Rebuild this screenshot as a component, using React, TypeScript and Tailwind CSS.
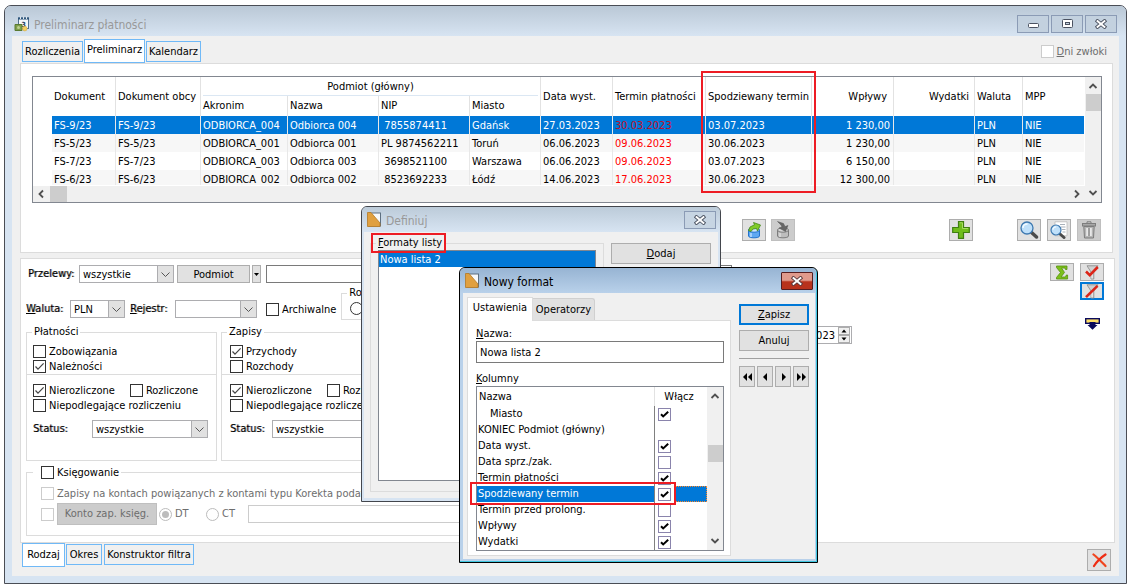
import React from 'react';
import { clsx } from 'clsx';

const DOCUMENTS = [
  { id: 'FS-9/23', acronym: 'ODBIORCA_004', name: 'Odbiorca 004', nip: '\u00a07855874411', city: 'Gdańsk', issued: '27.03.2023', due: '30.03.2023', expected: '03.07.2023', income: '1 230,00', selected: true },
  { id: 'FS-5/23', acronym: 'ODBIORCA_001', name: 'Odbiorca 001', nip: 'PL 9874562211', city: 'Toruń', issued: '06.06.2023', due: '09.06.2023', expected: '30.06.2023', income: '1 230,00' },
  { id: 'FS-7/23', acronym: 'ODBIORCA_003', name: 'Odbiorca 003', nip: '\u00a03698521100', city: 'Warszawa', issued: '06.06.2023', due: '09.06.2023', expected: '03.07.2023', income: '6 150,00' },
  { id: 'FS-6/23', acronym: 'ODBIORCA_002', name: 'Odbiorca 002', nip: '\u00a08523692233', city: 'Łódź', issued: '14.06.2023', due: '17.06.2023', expected: '30.06.2023', income: '12 300,00' },
];

const COLUMNS = [
  { name: 'Miasto', on: true, indent: true },
  { name: 'KONIEC Podmiot (główny)' },
  { name: 'Data wyst.', on: true },
  { name: 'Data sprz./zak.', on: false },
  { name: 'Termin płatności', on: true },
  { name: 'Spodziewany termin', on: true, selected: true },
  { name: 'Termin przed prolong.', on: false },
  { name: 'Wpływy', on: true },
  { name: 'Wydatki', on: true },
];

/* ---------- small form controls ---------- */

interface CheckProps {
  label?: React.ReactNode;
  checked?: boolean;
  disabled?: boolean;
  ariaLabel?: string;
}

const Check: React.FC<CheckProps> = ({ label, checked, disabled, ariaLabel }) => (
  <label className={clsx('flex h-[15px] items-center gap-[3px] whitespace-nowrap', disabled && 'text-[#6d6d6d]')}>
    <span className="relative size-[13px] shrink-0">
      <input
        type="checkbox"
        defaultChecked={checked}
        disabled={disabled}
        aria-label={ariaLabel}
        className="peer block size-[13px] appearance-none border border-[#333] bg-white disabled:border-[#ccc]"
      />
      <svg viewBox="0 0 13 13" className="pointer-events-none absolute inset-0 hidden size-[13px] peer-checked:block">
        <path d="M2.5 6.5 5 9.2 10.6 3.4" fill="none" stroke="#444" strokeWidth="1.2" />
      </svg>
    </span>
    {label && <span className="pt-px">{label}</span>}
  </label>
);

const GridCheck: React.FC<{ checked: boolean; label: string }> = ({ checked, label }) => (
  <span className="relative block size-[13px]">
    <input
      type="checkbox"
      aria-label={label}
      defaultChecked={checked}
      className="peer block size-[13px] appearance-none border border-[#8a84ac] bg-white"
    />
    <svg viewBox="0 0 13 13" className="pointer-events-none absolute inset-0 hidden size-[13px] peer-checked:block">
      <path d="M3 6.2 5.2 8.4 10.2 3.8" fill="none" stroke="#000" strokeWidth="2" />
    </svg>
  </span>
);

const Radio: React.FC<{ label?: string; checked?: boolean; disabled?: boolean; name: string }> = ({ label, checked, disabled, name }) => (
  <label className={clsx('flex items-center gap-[3px]', disabled && 'text-[#6d6d6d]')}>
    <span className="relative size-[13px] shrink-0">
      <input
        type="radio"
        name={name}
        defaultChecked={checked}
        disabled={disabled}
        aria-label={label ?? name}
        className="peer block size-[13px] appearance-none rounded-full border border-[#333] bg-white disabled:border-[#bcbcbc]"
      />
      <svg viewBox="0 0 13 13" className="pointer-events-none absolute inset-0 hidden size-[13px] peer-checked:block">
        <circle cx="6.5" cy="6.5" r="3.5" fill="#bcbcbc" />
      </svg>
    </span>
    {label}
  </label>
);

const Combo: React.FC<{ id: string; value: string; className: string }> = ({ id, value, className }) => (
  <div className={clsx('relative h-[18px] shrink-0', className)}>
    <select id={id} defaultValue={value} className="block h-full w-full appearance-none border border-[#adadb0] bg-white pt-px pr-4 pl-[3px] leading-[15px]">
      <option>{value}</option>
    </select>
    <svg viewBox="0 0 17 18" className="pointer-events-none absolute top-0 right-0 h-[18px] w-[17px]">
      <rect x="0.5" y="0.5" width="16" height="17" fill="#e1e1e1" stroke="#adadb0" />
      <path d="M4.5 7.5 8.5 11.5 12.5 7.5" fill="none" stroke="#555" />
    </svg>
  </div>
);

const Caption: React.FC<{ htmlFor: string; className?: string; children: React.ReactNode }> = ({ htmlFor, className, children }) => (
  <label htmlFor={htmlFor} className={clsx('shrink-0 whitespace-nowrap [text-shadow:1px_0_0_#00000070]', className)}>
    {children}
  </label>
);

const IconButton: React.FC<{ label: string; className?: string; children: React.ReactNode }> = ({ label, className, children }) => (
  <button aria-label={label} title={label} className={clsx('flex w-6 shrink-0 items-center justify-center border', className)}>
    {children}
  </button>
);

const Tab: React.FC<{ active?: boolean; className?: string; children: React.ReactNode }> = ({ active, className, children }) => (
  <button
    role="tab"
    aria-selected={!!active}
    className={clsx('shrink-0 border border-[#70b9f7] text-center whitespace-nowrap', active ? 'h-6 bg-white' : 'h-[21px]', className)}
  >
    {children}
  </button>
);

/* ---------- icons ---------- */

const Chevron: React.FC<{ dir: 'up' | 'down' | 'left' | 'right' }> = ({ dir }) => (
  <svg
    viewBox="0 0 10 10"
    className={clsx('size-[10px]', dir === 'down' && 'rotate-180', dir === 'left' && '-rotate-90', dir === 'right' && 'rotate-90')}
  >
    <path d="M1.5 7 5 3.5 8.5 7" fill="none" stroke="#505050" strokeWidth="1.8" />
  </svg>
);

const CrossGlyph: React.FC<{ edge?: string }> = ({ edge = '#4b5261' }) => (
  <svg viewBox="0 0 12 10" className="h-[10px] w-3">
    <path d="M2.5 2.1 9.500 7.900M9.500 2.100 2.500 7.900" stroke={edge} strokeWidth="3.800" strokeLinecap="square" />
    <path d="M2.500 2.100 9.500 7.900M9.500 2.100 2.500 7.900" stroke="#fff" strokeWidth="1.900" strokeLinecap="square" />
  </svg>
);

const FormatIcon = () => (
  <svg viewBox="0 0 14 15" className="h-[15px] w-[14px]">
    <rect x="2" y="1" width="11.5" height="13" fill="#f7f9fb" stroke="#5d6f80" />
    <path d="M.5.5 4 .5 13 11v3.5H.5z" fill="#e0a040" stroke="#b57a24" strokeWidth=".8" />
  </svg>
);

const CalendarIcon = () => (
  <svg viewBox="0 0 16 16" className="size-4">
    <rect x="4.5" y="2" width="10" height="10.5" fill="#f4f6f8" stroke="#51718f" />
    <path d="M4 1.500h11v2H4z" fill="#2f567c" />
    <path d="M6.5.5v2.500M9.5.5v2.500M12.5.5v2.500" stroke="#dfe7ee" />
    <text x="7.400" y="10.500" fontSize="7" fontWeight="bold" fill="#23405e">3</text>
    <path d="M1 8.5h7v6H1z" fill="#7f9f4c" stroke="#597a31" />
    <circle cx="4.5" cy="11.5" r="1.5" fill="#bdd08f" />
    <circle cx="10.8" cy="12.6" r="2.3" fill="#f2cf62" stroke="#d9a93a" strokeWidth=".6" />
  </svg>
);

const TankIcon: React.FC<{ grey?: boolean }> = ({ grey }) => (
  <svg viewBox="0 0 18 18" className="size-[18px]">
    <path d="M3.500 9v6c0 2.400 11 2.400 11 0V9z" fill={grey ? '#bdbdbd' : '#5fa8f2'} stroke={grey ? '#7d7d7d' : '#2373cc'} />
    <ellipse cx="9" cy="9" rx="5.500" ry="2.200" fill={grey ? '#d6d6d6' : '#cfe6ff'} stroke={grey ? '#7d7d7d' : '#2373cc'} />
    <path d="M6 12v4" stroke={grey ? '#dedede' : '#b9dcff'} strokeWidth="1.5" />
    {grey ? (
      <path d="M3.500.5 9.500 2.500 11 5.500l3-1-2.500 6-6.500-3.500 3-.8L7 4z" fill="#666" stroke="#555" strokeWidth=".5" />
    ) : (
      <path d="M3.500 9.500 5 6l4.500-2.200L8.500 1.500l7 2.500-3 6-1-2.500-3.500.5-2 2.500z" fill="#80cc28" stroke="#44851a" strokeWidth=".8" />
    )}
  </svg>
);

const PlusIcon = () => (
  <svg viewBox="0 0 18 18" className="size-[18px]">
    <path d="M6.5.7h5v5.800h5.800v5h-5.800v5.800h-5v-5.800H.7v-5h5.800z" fill="#6fbd1c" stroke="#3f7f10" strokeWidth="1.2" />
    <path d="M7.500 1.800h3v5.700h5.700" fill="none" stroke="#a7dc63" />
  </svg>
);

const LensIcon = () => (
  <svg viewBox="0 0 20 18" className="h-[18px] w-5">
    <path d="m12 11 5.500 5" stroke="#4b4b4b" strokeWidth="3.5" strokeLinecap="round" />
    <circle cx="8" cy="7" r="6" fill="#bfe0fa" stroke="#3e79b0" strokeWidth="1.3" />
    <path d="M4 7c0-2.500 2-4 4.500-4" fill="none" stroke="#f2faff" strokeWidth="1.5" />
  </svg>
);

const PreviewIcon = () => (
  <svg viewBox="0 0 20 18" className="h-[18px] w-5">
    <path d="M6 .8h12v14H6z" fill="#fff" stroke="#b5b5b5" strokeWidth=".7" />
    <path d="M11 3.500h5M12 6h4.500M13 8.500h3.500M13.500 11h3" stroke="#a9b1b9" />
    <path d="m10.500 12.500 4.500 4" stroke="#4b4b4b" strokeWidth="3" strokeLinecap="round" />
    <circle cx="7" cy="9" r="5" fill="#bfe0fa" stroke="#3e79b0" strokeWidth="1.2" />
    <path d="M4 8.800c0-2 1.500-3 3.200-3" fill="none" stroke="#f2faff" strokeWidth="1.3" />
  </svg>
);

const BinIcon = () => (
  <svg viewBox="0 0 16 18" className="h-[18px] w-4">
    <path d="M6 2.500V.8h4v1.700" fill="none" stroke="#7d7d7d" />
    <rect x="1.5" y="2.5" width="13" height="2.5" fill="#a8a8a8" stroke="#7d7d7d" />
    <path d="M2.800 5.500h10.400l-.7 11.500H3.500z" fill="#b4b4b4" stroke="#7d7d7d" />
    <path d="M6.200 7v8M9.800 7v8" stroke="#e8e8e8" strokeWidth="2" />
    <path d="M8 7v8" stroke="#7d7d7d" />
  </svg>
);

const SumIcon = () => (
  <svg viewBox="0 0 14 15" className="h-[15px] w-[14px]">
    <path d="M1.500 1h10.500v3.500h-1.500L10 3H6.500l3 4.400L6 12h4.500l.8-2h1.300v4H1.500v-1.500L5.500 7.500 1.500 2.500z" fill="#7cc01b" stroke="#55900f" strokeWidth=".8" />
  </svg>
);

const FunnelIcon: React.FC<{ off?: boolean }> = ({ off }) => (
  <svg viewBox="0 0 16 15" className="h-[15px] w-4">
    <path d="M3 .8h11L9.800 7v7H7V7z" fill="#d0d0d0" stroke="#909090" strokeWidth=".9" />
    <path d="M8 7.500v6" stroke="#f5f5f5" />
    <path d={off ? 'M2 13.200 13.500 1.800' : 'M2 6.500 5.800 10.200 13.800 2'} fill="none" stroke="#dc2418" strokeWidth="2.6" />
  </svg>
);

const ExpandIcon = () => (
  <svg viewBox="0 0 15 12" className="h-3 w-[15px]">
    <rect x=".7" y=".7" width="13.600" height="4.600" fill="#ffe066" stroke="#0a0a5c" strokeWidth="1.4" />
    <path d="M4.500 4h6v3h2l-5 4.800L2.500 7h2z" fill="#0a0a5c" />
  </svg>
);

const RedCross = () => (
  <svg viewBox="0 0 15 15" className="size-[15px]">
    <path d="M1.500 1.500C6 5 10 9.500 13.500 13" fill="none" stroke="#f0451e" strokeWidth="2.2" strokeLinecap="round" />
    <path d="M13.500 1.500C9 4.500 4.500 9 2 13" fill="none" stroke="#ee2c12" strokeWidth="2.2" strokeLinecap="round" />
  </svg>
);

/* ---------- document list ---------- */

const TH = 'border-l border-[#e2e2e2] p-0 pl-[2px] text-left font-normal whitespace-nowrap';
const TD = 'h-[18px] p-0 pt-[2px] pl-[2px] whitespace-nowrap';

const DocumentTable = () => (
  <table className="w-full table-fixed border-separate border-spacing-0">
    <colgroup>
      <col className="w-[19px]" />
      <col className="w-[63px]" />
      <col className="w-[85px]" />
      <col className="w-[87px]" />
      <col className="w-[91px]" />
      <col className="w-[91px]" />
      <col className="w-[71px]" />
      <col className="w-[72px]" />
      <col className="w-[93px]" />
      <col className="w-[106px]" />
      <col className="w-[82px]" />
      <col className="w-[81px]" />
      <col className="w-[48px]" />
      <col />
    </colgroup>
    <thead>
      <tr className="h-[19px]">
        <td rowSpan={2} className="p-0" />
        <th rowSpan={2} className="p-0 pl-[2px] text-left font-normal">Dokument</th>
        <th rowSpan={2} className={TH}>Dokument obcy</th>
        <th colSpan={4} className="border-l border-[#e2e2e2] p-0 px-[2px] font-normal">
          <div className="h-[19px] border-b border-[#dbe7f3] pt-px leading-[18px]">Podmiot (główny)</div>
        </th>
        <th rowSpan={2} className={TH}>Data wyst.</th>
        <th rowSpan={2} className={TH}>Termin płatności</th>
        <th rowSpan={2} className={TH}>Spodziewany termin</th>
        <th rowSpan={2} className="border-l border-[#e2e2e2] p-0 pr-[6px] text-right font-normal">Wpływy</th>
        <th rowSpan={2} className="border-l border-[#e2e2e2] p-0 pr-[5px] text-right font-normal">Wydatki</th>
        <th rowSpan={2} className={TH}>Waluta</th>
        <th rowSpan={2} className={TH}>MPP</th>
      </tr>
      <tr className="h-5">
        <th className={TH}>Akronim</th>
        <th className={TH}>Nazwa</th>
        <th className={TH}>NIP</th>
        <th className={TH}>Miasto</th>
      </tr>
    </thead>
    <tbody>
      {DOCUMENTS.map((doc, i) => {
        const first = clsx(TD, doc.selected ? 'bg-[#0078d7] text-white' : i % 2 ? 'bg-[#f7f7f7]' : 'bg-white');
        const cell = clsx(first, 'border-l border-[#e8e8e8]');
        return (
          <tr key={doc.id}>
            <td className="p-0" />
            <td className={first}>{doc.id}</td>
            <td className={cell}>{doc.id}</td>
            <td className={cell}>{doc.acronym}</td>
            <td className={cell}>{doc.name}</td>
            <td className={cell}>{doc.nip}</td>
            <td className={cell}>{doc.city}</td>
            <td className={cell}>{doc.issued}</td>
            <td className={cell}>
              <span className={doc.selected ? 'text-[#c0102c]' : 'text-[#f00]'}>{doc.due}</span>
            </td>
            <td className={cell}>{doc.expected}</td>
            <td className={clsx(cell, 'pr-[3px] text-right')}>{doc.income}</td>
            <td className={cell} />
            <td className={cell}>PLN</td>
            <td className={cell}>NIE</td>
          </tr>
        );
      })}
    </tbody>
  </table>
);

const DocumentList = () => (
  <div className="relative flex border border-[#828790] bg-white">
    <div className="min-w-0 flex-1">
      <div className="h-[108px] overflow-hidden pr-px">
        <DocumentTable />
      </div>
      <div className="mt-px flex h-4 items-center bg-[#f0f0f0] px-[3px]">
        <Chevron dir="left" />
        <div className="ml-1 h-4 w-[17px] bg-[#cdcdcd]" />
        <div className="ml-auto">
          <Chevron dir="right" />
        </div>
      </div>
    </div>
    <div className="flex w-4 flex-col items-center bg-[#f0f0f0] py-1">
      <Chevron dir="up" />
      <div className="mt-[3px] h-[17px] w-[15px] bg-[#cdcdcd]" />
      <div className="mt-auto">
        <Chevron dir="down" />
      </div>
    </div>
    <div className="pointer-events-none absolute -top-[6px] left-[668px] h-[122px] w-[115px] border-2 border-[#ed1c24]" />
  </div>
);

/* ---------- filters ---------- */

interface EntryGroupProps {
  id: string;
  title: string;
  items: { label: string; checked: boolean }[];
  className: string;
  padClass: string;
  comboGap: string;
}

const EntryGroup: React.FC<EntryGroupProps> = ({ id, title, items, className, padClass, comboGap }) => (
  <fieldset className={clsx('h-[135px] shrink-0 border border-[#dcdcdc]', className)}>
    <legend className="ml-[5px] px-[2px] leading-3">{title}</legend>
    <div className={clsx('border-b border-[#dcdcdc] pt-[6px]', padClass)}>
      {items.map((item) => (
        <Check key={item.label} label={item.label} checked={item.checked} />
      ))}
    </div>
    <div className={clsx('pt-2', padClass)}>
      <div className="flex gap-[15px]">
        <Check label="Nierozliczone" checked />
        <Check label="Rozliczone" />
      </div>
      <Check label="Niepodlegające rozliczeniu" />
      <div className={clsx('mt-[7px] flex items-center', comboGap)}>
        <Caption htmlFor={id}>Status:</Caption>
        <Combo id={id} value="wszystkie" className="w-[116px]" />
      </div>
    </div>
  </fieldset>
);

const Filters = () => (
  <section className="flex h-[285px] border border-[#dcdcdc] bg-white">
    <div className="min-w-0 flex-1 pt-[5px] pl-[5px]">
      <div className="flex h-5 items-center">
        <Caption htmlFor="transfers" className="w-[53px] pl-[2px]">Przelewy:</Caption>
        <Combo id="transfers" value="wszystkie" className="w-[95px]" />
        <button className="ml-[3px] h-[18px] w-[73px] shrink-0 border border-[#adadad] bg-[#e1e1e1] pt-px leading-[15px]">Podmiot</button>
        <button aria-label="Rodzaj podmiotu" className="ml-[2px] flex h-[18px] w-[9px] shrink-0 items-center justify-center border border-[#adadad] bg-[#e1e1e1]">
          <svg viewBox="0 0 5 3" className="h-[3px] w-[5px]"><path d="M0 0h5L2.500 3z" /></svg>
        </button>
        <input aria-label="Podmiot" className="ml-[5px] h-[18px] w-[466px] border border-[#7a7a7a] bg-white" />
      </div>
      <div className="mt-[3px] flex h-[33px] items-end">
        <div className="mb-[2px] flex h-[18px] items-center">
          <Caption htmlFor="currency" className="w-[44px]"><u>W</u>aluta:</Caption>
          <Combo id="currency" value="PLN" className="w-[55px]" />
          <Caption htmlFor="register" className="ml-[5px] w-[45px]"><u>R</u>ejestr:</Caption>
          <Combo id="register" value="" className="mr-[9px] w-[82px]" />
          <Check label="Archiwalne" />
        </div>
        <fieldset className="ml-[5px] h-[33px] w-[200px] border border-[#dcdcdc]">
          <legend className="ml-[5px] px-[2px] leading-3">Rozliczenia</legend>
          <div className="pt-[3px] pl-2">
            <Radio name="Rozliczenia" />
          </div>
        </fieldset>
      </div>
      <div className="mt-[6px] flex items-start">
        <EntryGroup
          id="payments-status"
          title="Płatności"
          items={[{ label: 'Zobowiązania', checked: false }, { label: 'Należności', checked: true }]}
          className="w-[191px]"
          padClass="px-[6px]"
          comboGap="gap-6"
        />
        <EntryGroup
          id="entries-status"
          title="Zapisy"
          items={[{ label: 'Przychody', checked: true }, { label: 'Rozchody', checked: false }]}
          className="ml-1 w-[260px]"
          padClass="px-[8px]"
          comboGap="gap-[7px]"
        />
        <div className="ml-[284px] flex h-[18px] w-[87px] shrink-0 border border-[#adadb0] bg-white">
          <input aria-label="Data" defaultValue="30.06.2023" className="min-w-0 flex-1 pt-px pr-[2px] text-right" />
          <svg viewBox="0 0 14 16" className="h-4 w-[14px]">
            <rect x="1.5" y=".5" width="11" height="7" fill="#f0f0f0" stroke="#adadad" />
            <rect x="1.5" y="8.5" width="11" height="7" fill="#f0f0f0" stroke="#adadad" />
            <path d="M4.500 5.500h5L7 2.500zM4.500 10.500h5L7 13.500z" />
          </svg>
        </div>
      </div>
      <fieldset className="mt-1 h-[71px] w-[700px] border border-[#dcdcdc]">
        <legend className="ml-[6px] pr-[2px] pl-2">
          <Check label="Księgowanie" />
        </legend>
        <div className="mt-[6px] pl-[14px]">
          <Check label="Zapisy na kontach powiązanych z kontami typu Korekta podatku" disabled />
          <div className="mt-[2px] flex h-[22px] items-center">
            <Check ariaLabel="Konto zapisu księgowego" disabled />
            <button disabled className="mr-[2px] ml-[3px] h-[22px] w-[100px] border border-[#bfbfbf] bg-[#ccc] text-[#6d6d6d]">Konto zap. księg.</button>
            <div className="w-[47px]"><Radio name="side" label="DT" checked disabled /></div>
            <div className="w-[42px]"><Radio name="side" label="CT" disabled /></div>
            <input aria-label="Konto" disabled className="h-[18px] w-[300px] border border-[#ccc] bg-white" />
          </div>
        </div>
      </fieldset>
    </div>
    <div className="grid auto-rows-min grid-cols-2 gap-x-[6px] gap-y-px pt-1 pr-[10px]">
      <IconButton label="Suma" className="h-[18px] border-[#adadad] bg-[#e1e1e1]"><SumIcon /></IconButton>
      <IconButton label="Filtruj" className="h-[18px] border-[#adadad] bg-[#e1e1e1]"><FunnelIcon /></IconButton>
      <button aria-label="Usuń filtr" className="col-start-2 flex h-[18px] w-6 items-center justify-center border-2 border-[#0078d7] bg-[#e1e1e1]">
        <FunnelIcon off />
      </button>
      <button aria-label="Rozwiń" className="col-start-2 mt-[17px] flex justify-center"><ExpandIcon /></button>
    </div>
  </section>
);

/* ---------- dialogs ---------- */

const DefineDialog = () => (
  <div role="dialog" aria-label="Definiuj" className="absolute top-[206px] left-[361px] flex h-[296px] w-[360px] flex-col rounded-t-[6px] border border-[#43464d] bg-[#d7e4f2] pb-[3px]">
    <header className="flex h-[25px] shrink-0 items-center rounded-t-[5px] bg-linear-to-b from-[#bccbd9] to-[#d7e4f2] pr-1 pl-[5px]">
      <FormatIcon />
      <h2 className="ml-[5px] pt-[2px] text-xs text-[#999]">Definiuj</h2>
      <button aria-label="Zamknij" className="ml-auto flex h-[18px] w-8 items-center justify-center border border-[#8b9bb5] bg-[#c7d5e3]"><CrossGlyph /></button>
    </header>
    <div className="mx-[2px] flex flex-1 items-start gap-[7px] bg-[#f0f0f0] pt-1 pl-[6px]">
      <fieldset className="relative h-[256px] w-[234px] shrink-0 border border-[#dcdcdc]">
        <legend className="ml-[5px] px-[2px] leading-[14px]"><u>F</u>ormaty listy</legend>
        <ul className="mx-[7px] h-[231px] border border-[#828790] bg-white">
          <li className="h-4 bg-[#0078d7] pt-px pl-px leading-4 text-white">Nowa lista 2</li>
        </ul>
        <div className="pointer-events-none absolute -top-[17px] left-0 h-5 w-[75px] border-2 border-[#ed1c24]" />
      </fieldset>
      <button className="mt-[7px] h-[21px] w-[100px] border border-[#adadad] bg-[#e1e1e1] pt-px"><u>D</u>odaj</button>
    </div>
  </div>
);

const NAV = [
  { label: 'Pierwszy', path: 'M5 0v8L1 4zM10 0v8L6 4z' },
  { label: 'Poprzedni', path: 'M7 0v8L3 4z' },
  { label: 'Następny', path: 'M4 0v8l4-4z' },
  { label: 'Ostatni', path: 'M1 0v8l4-4zM6 0v8l4-4z' },
];

const ColumnList = () => (
  <div className="relative flex h-[165px] border border-[#828790] bg-white">
    <table aria-labelledby="columns-title" className="min-w-0 flex-1 table-fixed border-separate border-spacing-0">
      <colgroup>
        <col className="w-[177px]" />
        <col className="w-[53px]" />
      </colgroup>
      <thead>
        <tr>
          <th className="h-[19px] p-0 pl-[2px] text-left font-normal">Nazwa</th>
          <th className="h-[19px] border-l border-[#e2e2e2] p-0 pr-1 font-normal">Włącz</th>
        </tr>
      </thead>
      <tbody>
        {COLUMNS.map((col) => (
          <tr key={col.name}>
            <td className={clsx('h-4 p-0 whitespace-nowrap', col.indent ? 'pl-[13px]' : 'pl-px', col.selected && 'bg-[#0078d7] text-white')}>{col.name}</td>
            <td className="h-4 border-l border-[#808080] p-0">
              <div className="flex h-4 items-center">
                <div className="w-[19px] pl-[3px]">{col.on !== undefined && <GridCheck checked={col.on} label={col.name} />}</div>
                <div className={clsx('h-4 flex-1', col.selected && 'border border-dotted border-[#ff8728] bg-[#0078d7]')} />
              </div>
            </td>
          </tr>
        ))}
      </tbody>
    </table>
    <div className="flex w-4 flex-col items-center bg-[#f0f0f0] py-1">
      <Chevron dir="up" />
      <div className="mt-[44px] h-[17px] w-[15px] bg-[#cdcdcd]" />
      <div className="mt-auto"><Chevron dir="down" /></div>
    </div>
    <div className="pointer-events-none absolute top-[95px] -left-[7px] h-[23px] w-[206px] border-2 border-[#ed1c24]" />
  </div>
);

const FormatDialog = () => (
  <div role="dialog" aria-label="Nowy format" className="absolute top-[267px] left-[459px] w-[359px] rounded-t-[6px] border border-black bg-[#b9d1ea] pb-[3px] shadow-[inset_-1px_-1px_0_#3fc6e0]">
    <header className="mr-px flex h-[25px] items-center rounded-t-[5px] bg-linear-to-b from-[#97b4d3] to-[#b9d1ea] pr-[3px] pl-[5px]">
      <FormatIcon />
      <h2 className="ml-[5px] pt-[2px] text-xs">Nowy format</h2>
      <button aria-label="Zamknij" className="ml-auto flex h-[18px] w-8 items-center justify-center rounded-[1px] border border-[#551d20] bg-linear-to-b from-[#e09a8c] from-45% to-[#b8321c] to-55%">
        <CrossGlyph edge="#5a3a3c" />
      </button>
    </header>
    <div className="mr-[2px] ml-[3px] flex gap-2 bg-[#f0f0f0] px-1 pt-[3px] pb-[3px]">
      <div className="w-[264px]">
        <div role="tablist" className="flex h-6 items-end">
          <button role="tab" aria-selected className="relative top-px z-10 h-6 w-[66px] border border-b-0 border-[#dcdcdc] bg-white pb-1">Ustawienia</button>
          <button role="tab" aria-selected={false} className="h-[22px] w-[62px] rounded-tr-[3px] border border-b-0 border-l-0 border-[#d0d0d0] bg-[#e1e1e1] pt-px whitespace-nowrap">Operatorzy</button>
        </div>
        <div className="border border-[#dcdcdc] bg-white pt-[6px] pr-[6px] pb-1 pl-2">
          <label htmlFor="format-name" className="block leading-[14px]"><u>N</u>azwa:</label>
          <input id="format-name" defaultValue="Nowa lista 2" className="block h-[22px] w-full border border-[#7a7a7a] bg-white px-[3px]" />
          <div id="columns-title" className="mt-[9px] leading-[14px]"><u>K</u>olumny</div>
          <ColumnList />
        </div>
      </div>
      <div className="w-[70px] pt-2">
        <button className="block h-[21px] w-full border-2 border-[#0078d7] bg-[#e1e1e1] pt-px leading-4"><u>Z</u>apisz</button>
        <button className="mt-[5px] block h-[21px] w-full border border-[#adadad] bg-[#e1e1e1] pt-px">Anuluj</button>
        <hr className="mt-[7px] mb-[7px] border-[#a0a0a0]" />
        <div className="flex justify-between">
          {NAV.map((item) => (
            <button key={item.label} aria-label={item.label} className="flex h-[21px] w-4 items-center justify-center border border-[#adadad] bg-[#e1e1e1]">
              <svg viewBox="0 0 11 8" className="h-2 w-[11px] shrink-0"><path d={item.path} /></svg>
            </button>
          ))}
        </div>
      </div>
    </div>
  </div>
);

/* ---------- main window ---------- */

const CAPTION_BUTTON = 'flex h-[18px] w-8 items-center justify-center border border-[#8b9bb5] bg-[#c3d1df]';

export default function App() {
  return (
    <div className="relative bg-white px-1 pt-[5px] pb-[2px] font-['DejaVu_Sans_Condensed','DejaVu_Sans',sans-serif] text-[11px] leading-4 text-black">
      <main className="rounded-t-[7px] border border-[#4a4d55] bg-[#d7e4f2] pb-[7px]">
        <header className="flex h-[30px] items-center rounded-t-[6px] bg-linear-to-b from-[#bac8d6] to-[#d7e4f2] px-[9px] pt-[5px]">
          <CalendarIcon />
          <h1 className="ml-1 pt-[2px] text-xs text-[#999]">Preliminarz płatności</h1>
          <div className="ml-auto flex gap-[2px]">
            <button aria-label="Minimalizuj" className={CAPTION_BUTTON}>
              <svg viewBox="0 0 11 5" className="mt-1 h-[5px] w-[11px]"><rect x=".5" y=".5" width="10" height="4" rx="1" fill="#fff" stroke="#4b5261" /></svg>
            </button>
            <button aria-label="Maksymalizuj" className={CAPTION_BUTTON}>
              <svg viewBox="0 0 11 9" className="h-[9px] w-[11px]">
                <rect x=".5" y=".5" width="10" height="8" rx="1" fill="#fff" stroke="#4b5261" />
                <rect x="3.5" y="3.5" width="4" height="2" fill="#c3d1df" stroke="#4b5261" />
              </svg>
            </button>
            <button aria-label="Zamknij" className={CAPTION_BUTTON}><CrossGlyph /></button>
          </div>
        </header>

        <div className="mx-[7px] bg-[#f0f0f0] pr-1 pl-2">
          <div className="flex h-[27px] items-end pl-[2px]">
            <div role="tablist" className="flex items-end gap-px">
              <Tab className="mb-px w-[61px] pt-px">Rozliczenia</Tab>
              <Tab active className="w-[61px] pb-[2px]">Preliminarz</Tab>
              <Tab className="mb-px w-[55px] pt-px">Kalendarz</Tab>
            </div>
            <div className="mr-2 mb-1 ml-auto">
              <Check label={<><u>D</u>ni zwłoki</>} disabled />
            </div>
          </div>

          <section className="mr-[2px] border border-[#dcdcdc] bg-white pt-3 pr-[10px] pb-[11px] pl-[11px]">
            <DocumentList />
            <div className="mt-4 flex justify-end">
              <IconButton label="Eksport" className="mr-[5px] h-[22px] border-[#adadad] bg-[#e1e1e1]"><TankIcon /></IconButton>
              <IconButton label="Import" className="mr-[154px] h-[22px] border-[#bfbfbf] bg-[#ccc]"><TankIcon grey /></IconButton>
              <IconButton label="Dodaj" className="mr-[44px] h-[22px] border-[#adadad] bg-[#e1e1e1]"><PlusIcon /></IconButton>
              <IconButton label="Szukaj" className="mr-[6px] h-[22px] border-[#adadad] bg-[#e1e1e1]"><LensIcon /></IconButton>
              <IconButton label="Podgląd" className="mr-[6px] h-[22px] border-[#adadad] bg-[#e1e1e1]"><PreviewIcon /></IconButton>
              <IconButton label="Usuń" className="mr-px h-[22px] border-[#bfbfbf] bg-[#ccc]"><BinIcon /></IconButton>
            </div>
          </section>

          <div className="mt-[5px]">
            <Filters />
          </div>

          <div className="flex h-[33px] items-start pl-[2px]">
            <div role="tablist" className="flex items-start">
              <Tab active className="w-[43px]">Rodzaj</Tab>
              <Tab className="mt-px ml-px w-[36px]">Okres</Tab>
              <Tab className="mt-px ml-[2px] w-[90px]">Konstruktor filtra</Tab>
            </div>
            <IconButton label="Zamknij okno" className="mt-[6px] mr-1 ml-auto h-[22px] border-[#adadad] bg-[#e1e1e1]"><RedCross /></IconButton>
          </div>
        </div>
      </main>

      <DefineDialog />
      <FormatDialog />
    </div>
  );
}
